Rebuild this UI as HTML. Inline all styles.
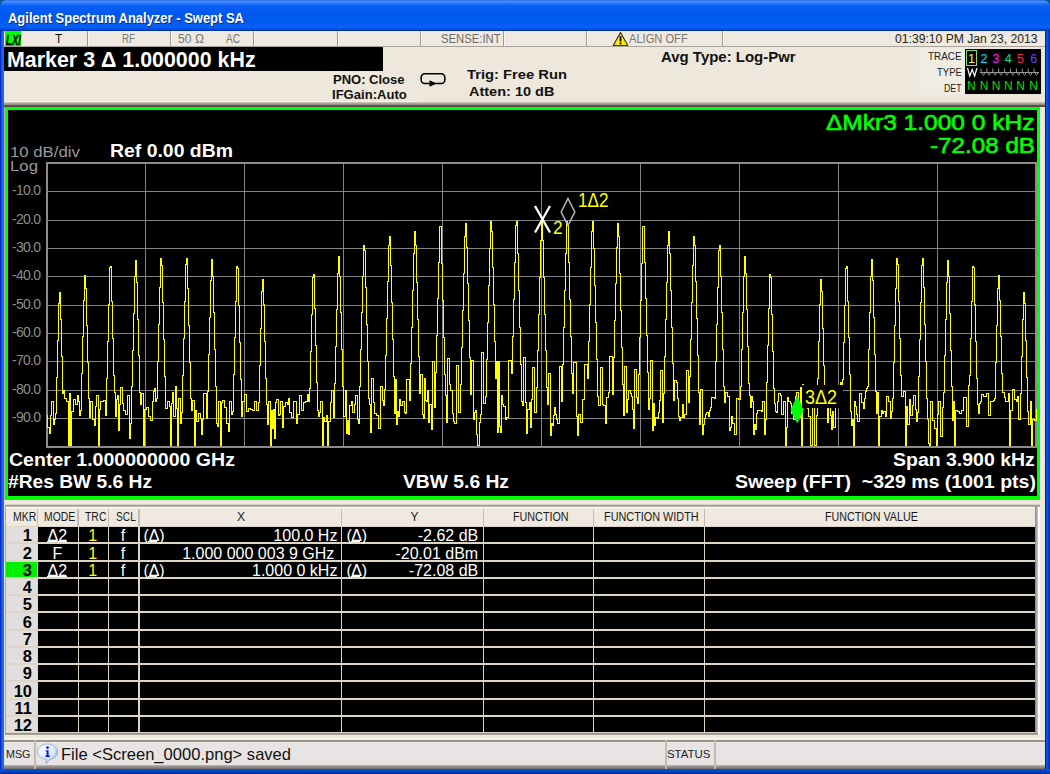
<!DOCTYPE html>
<html><head><meta charset="utf-8">
<style>
*{margin:0;padding:0;box-sizing:border-box}
html,body{width:1050px;height:774px;overflow:hidden;background:#0a4fd8;font-family:"Liberation Sans",sans-serif}
.a{position:absolute;white-space:nowrap}
</style></head><body>

<div class="a" style="left:0px;top:0px;width:1050px;height:774px;background:#0a5a90"></div>
<div class="a" style="left:0px;top:12px;width:1050px;height:762px;background:#0650dc"></div>
<div class="a" style="left:0px;top:0px;width:1050px;height:31px;background:linear-gradient(#2a6ae0 0px,#4a90ff 1.5px,#2a78ff 3px,#0a5ef6 6px,#0058ee 14px,#005af0 22px,#0a62f8 27px,#0050e0 29px,#0030a0 31px);border-radius:7px 7px 0 0"></div>
<div class="a" style="left:0px;top:31px;width:4px;height:743px;background:linear-gradient(90deg,#0024b0 0px,#0a3ad0 1px,#1a64f4 2px,#1a6af8 4px)"></div>
<div class="a" style="left:1045px;top:31px;width:5px;height:743px;background:linear-gradient(90deg,#202020 0px,#202020 1px,#0a5cf6 1px,#0048d8 3px,#002890 5px)"></div>
<div class="a" style="left:0px;top:769px;width:1050px;height:5px;background:linear-gradient(#0a56e0,#0040c0 3px,#002a90 5px)"></div>
<div class="a" style="top:11.00px;font-size:14.5px;line-height:14.5px;font-weight:bold;color:#fff;white-space:pre;left:8.00px;transform:scaleX(0.8948);transform-origin:0 0;text-shadow:1px 1px 0 #0a2a80;">Agilent Spectrum Analyzer - Swept SA</div>
<div class="a" style="left:4px;top:31px;width:1041px;height:738px;background:#ede7dc"></div>
<div class="a" style="left:4px;top:31px;width:1041px;height:16px;background:#efe9df"></div>
<div class="a" style="left:5px;top:31px;width:16px;height:16px;background:#00ff00"></div>
<div class="a" style="top:33.00px;font-size:14px;line-height:14px;font-weight:bold;color:#000;white-space:pre;left:5.50px;transform:scaleX(0.6887);transform-origin:0 0;font-style:italic;-webkit-text-stroke:0.3px #000;">LXI</div>
<div class="a" style="left:4px;top:46px;width:1041px;height:1px;background:#a8a49c"></div>
<div class="a" style="left:87px;top:31px;width:1px;height:15px;background:#9c988c"></div>
<div class="a" style="left:88px;top:31px;width:1px;height:15px;background:#fbf8f0"></div>
<div class="a" style="left:170px;top:31px;width:1px;height:15px;background:#9c988c"></div>
<div class="a" style="left:171px;top:31px;width:1px;height:15px;background:#fbf8f0"></div>
<div class="a" style="left:253px;top:31px;width:1px;height:15px;background:#9c988c"></div>
<div class="a" style="left:254px;top:31px;width:1px;height:15px;background:#fbf8f0"></div>
<div class="a" style="left:337px;top:31px;width:1px;height:15px;background:#9c988c"></div>
<div class="a" style="left:338px;top:31px;width:1px;height:15px;background:#fbf8f0"></div>
<div class="a" style="left:420px;top:31px;width:1px;height:15px;background:#9c988c"></div>
<div class="a" style="left:421px;top:31px;width:1px;height:15px;background:#fbf8f0"></div>
<div class="a" style="left:503px;top:31px;width:1px;height:15px;background:#9c988c"></div>
<div class="a" style="left:504px;top:31px;width:1px;height:15px;background:#fbf8f0"></div>
<div class="a" style="left:586px;top:31px;width:1px;height:15px;background:#9c988c"></div>
<div class="a" style="left:587px;top:31px;width:1px;height:15px;background:#fbf8f0"></div>
<div class="a" style="left:722px;top:31px;width:1px;height:15px;background:#9c988c"></div>
<div class="a" style="left:723px;top:31px;width:1px;height:15px;background:#fbf8f0"></div>
<div class="a" style="top:33.00px;font-size:12px;line-height:12px;font-weight:normal;color:#111;white-space:pre;left:55px;">T</div>
<div class="a" style="top:33.00px;font-size:12.5px;line-height:12.5px;font-weight:normal;color:#777;white-space:pre;left:122.00px;transform:scaleX(0.7798);transform-origin:0 0;">RF</div>
<div class="a" style="top:33.00px;font-size:12.5px;line-height:12.5px;font-weight:normal;color:#777;white-space:pre;left:178.00px;transform:scaleX(0.9731);transform-origin:0 0;">50 Ω</div>
<div class="a" style="top:33.00px;font-size:12.5px;line-height:12.5px;font-weight:normal;color:#777;white-space:pre;left:226.00px;transform:scaleX(0.8058);transform-origin:0 0;">AC</div>
<div class="a" style="top:33.00px;font-size:12.5px;line-height:12.5px;font-weight:normal;color:#6a6a6a;white-space:pre;left:441.00px;transform:scaleX(0.9043);transform-origin:0 0;">SENSE:INT</div>
<div class="a" style="top:33.00px;font-size:12.5px;line-height:12.5px;font-weight:normal;color:#777;white-space:pre;left:629.30px;transform:scaleX(0.8896);transform-origin:0 0;">ALIGN OFF</div>
<svg class="a" style="left:612px;top:31px" width="17" height="16" viewBox="0 0 17 16"><path d="M8.5 1.5 L15.8 14.5 L1.2 14.5 Z" fill="#ffee00" stroke="#333" stroke-width="1.2" stroke-linejoin="round"/><rect x="7.6" y="5" width="1.8" height="5.5" fill="#000"/><rect x="7.6" y="11.5" width="1.8" height="1.8" fill="#000"/></svg>
<div class="a" style="top:33.00px;font-size:12.5px;line-height:12.5px;font-weight:normal;color:#222;white-space:pre;left:894.50px;transform:scaleX(0.9719);transform-origin:0 0;">01:39:10 PM Jan 23, 2013</div>
<div class="a" style="left:4px;top:47px;width:379px;height:24px;background:#000"></div>
<div class="a" style="top:50.00px;font-size:21.5px;line-height:21.5px;font-weight:bold;color:#fff;white-space:pre;left:6.80px;transform:scaleX(0.9954);transform-origin:0 0;">Marker 3 Δ 1.000000 kHz</div>
<div class="a" style="left:4px;top:101px;width:415px;height:1px;background:#f8f4ec"></div>
<div class="a" style="left:4px;top:102px;width:1041px;height:3px;background:linear-gradient(#d0cabe,#8a847a)"></div>
<div class="a" style="left:4px;top:105px;width:1041px;height:1px;background:#5e5850"></div>
<div class="a" style="top:73.00px;font-size:13px;line-height:13px;font-weight:bold;color:#111;white-space:pre;left:333.30px;transform:scaleX(0.9998);transform-origin:0 0;">PNO: Close</div>
<div class="a" style="top:88.00px;font-size:13px;line-height:13px;font-weight:bold;color:#111;white-space:pre;left:332.00px;transform:scaleX(1.0046);transform-origin:0 0;">IFGain:Auto</div>
<svg class="a" style="left:418px;top:70px" width="30" height="20" viewBox="0 0 30 20"><rect x="3.2" y="3.7" width="23.6" height="9.8" rx="3.5" fill="none" stroke="#000" stroke-width="1.6"/><path d="M11.5 10.2 L18.5 13.5 L11.5 16.8 Z" fill="#000"/></svg>
<div class="a" style="top:68.00px;font-size:13.5px;line-height:13.5px;font-weight:bold;color:#111;white-space:pre;left:466.70px;transform:scaleX(1.0925);transform-origin:0 0;">Trig: Free Run</div>
<div class="a" style="top:85.00px;font-size:13.5px;line-height:13.5px;font-weight:bold;color:#111;white-space:pre;left:469.30px;transform:scaleX(1.0736);transform-origin:0 0;">Atten: 10 dB</div>
<div class="a" style="top:50.00px;font-size:14.5px;line-height:14.5px;font-weight:bold;color:#111;white-space:pre;left:661.00px;transform:scaleX(1.0321);transform-origin:0 0;">Avg Type: Log-Pwr</div>
<div class="a" style="left:920px;top:48px;width:45px;height:47px;background:#f1ece2"></div>
<div class="a" style="top:51.00px;font-size:11.5px;line-height:11.5px;font-weight:normal;color:#222;white-space:pre;left:927.50px;transform:scaleX(0.8590);transform-origin:0 0;">TRACE</div>
<div class="a" style="top:67.00px;font-size:11.5px;line-height:11.5px;font-weight:normal;color:#222;white-space:pre;left:936.70px;transform:scaleX(0.8254);transform-origin:0 0;">TYPE</div>
<div class="a" style="top:83.00px;font-size:11.5px;line-height:11.5px;font-weight:normal;color:#222;white-space:pre;left:943.50px;transform:scaleX(0.7604);transform-origin:0 0;">DET</div>
<div class="a" style="left:965px;top:49px;width:76px;height:45px;background:#000"></div>
<div class="a" style="left:966px;top:50px;width:11px;height:16px;border:1px solid #80e080"></div>
<div class="a" style="top:53.00px;font-size:12.5px;line-height:12.5px;font-weight:normal;color:#ffff00;white-space:pre;left:471.4px;width:1000px;text-align:center;">1</div>
<div class="a" style="top:80.00px;font-size:12px;line-height:12px;font-weight:normal;color:#00e000;white-space:pre;left:471.4px;width:1000px;text-align:center;">N</div>
<div class="a" style="top:53.00px;font-size:12.5px;line-height:12.5px;font-weight:normal;color:#00e8ff;white-space:pre;left:484px;width:1000px;text-align:center;">2</div>
<div class="a" style="top:80.00px;font-size:12px;line-height:12px;font-weight:normal;color:#00e000;white-space:pre;left:484px;width:1000px;text-align:center;">N</div>
<div class="a" style="top:53.00px;font-size:12.5px;line-height:12.5px;font-weight:normal;color:#ff20ff;white-space:pre;left:496.1px;width:1000px;text-align:center;">3</div>
<div class="a" style="top:80.00px;font-size:12px;line-height:12px;font-weight:normal;color:#00e000;white-space:pre;left:496.1px;width:1000px;text-align:center;">N</div>
<div class="a" style="top:53.00px;font-size:12.5px;line-height:12.5px;font-weight:normal;color:#00e090;white-space:pre;left:508.29999999999995px;width:1000px;text-align:center;">4</div>
<div class="a" style="top:80.00px;font-size:12px;line-height:12px;font-weight:normal;color:#00e000;white-space:pre;left:508.29999999999995px;width:1000px;text-align:center;">N</div>
<div class="a" style="top:53.00px;font-size:12.5px;line-height:12.5px;font-weight:normal;color:#ff2860;white-space:pre;left:520.5px;width:1000px;text-align:center;">5</div>
<div class="a" style="top:80.00px;font-size:12px;line-height:12px;font-weight:normal;color:#00e000;white-space:pre;left:520.5px;width:1000px;text-align:center;">N</div>
<div class="a" style="top:53.00px;font-size:12.5px;line-height:12.5px;font-weight:normal;color:#6a40ff;white-space:pre;left:533.7px;width:1000px;text-align:center;">6</div>
<div class="a" style="top:80.00px;font-size:12px;line-height:12px;font-weight:normal;color:#00e000;white-space:pre;left:533.7px;width:1000px;text-align:center;">N</div>
<svg class="a" style="left:965px;top:66px" width="76" height="12" viewBox="0 0 76 12"><path d="M2.5 2 L4.8 10 L7.2 3.5 L9.6 10 L12 2" stroke="#fff" stroke-width="1.2" fill="none"/><path d="M15 6.5 L74 6.5 M16.0 6.5 L16.0 2.5 M16.8 6.5 Q18.3 12 19.8 6.5 M21.9 6.5 L21.9 2.5 M22.7 6.5 Q24.2 12 25.7 6.5 M27.8 6.5 L27.8 2.5 M28.6 6.5 Q30.1 12 31.6 6.5 M33.7 6.5 L33.7 2.5 M34.5 6.5 Q36.0 12 37.5 6.5 M39.6 6.5 L39.6 2.5 M40.4 6.5 Q41.9 12 43.4 6.5 M45.5 6.5 L45.5 2.5 M46.3 6.5 Q47.8 12 49.3 6.5 M51.4 6.5 L51.4 2.5 M52.2 6.5 Q53.7 12 55.2 6.5 M57.3 6.5 L57.3 2.5 M58.1 6.5 Q59.6 12 61.1 6.5 M63.2 6.5 L63.2 2.5 M64.0 6.5 Q65.5 12 67.0 6.5 M69.1 6.5 L69.1 2.5 M69.9 6.5 Q71.4 12 72.9 6.5 " stroke="#9a9a9a" stroke-width="1" fill="none"/></svg>
<div class="a" style="left:4px;top:106px;width:1041px;height:395px;background:#ede7dc"></div>
<div class="a" style="left:4px;top:106px;width:1041px;height:1px;background:#4e4842"></div>
<div class="a" style="left:4px;top:107px;width:1px;height:394px;background:#b8b4ac"></div>
<div class="a" style="left:5px;top:107px;width:1035px;height:393px;background:#00ff00"></div>
<div class="a" style="left:8px;top:110px;width:1029px;height:386px;background:#000"></div>
<div class="a" style="top:112.00px;font-size:22.5px;line-height:22.5px;font-weight:normal;color:#00ff00;white-space:pre;left:826.10px;transform:scaleX(1.0890);transform-origin:0 0;-webkit-text-stroke:0.6px #00ff00;">ΔMkr3 1.000 0 kHz</div>
<div class="a" style="top:135.00px;font-size:22.5px;line-height:22.5px;font-weight:normal;color:#00ff00;white-space:pre;left:929.50px;transform:scaleX(1.0761);transform-origin:0 0;-webkit-text-stroke:0.6px #00ff00;">-72.08 dB</div>
<div class="a" style="top:144.00px;font-size:15.5px;line-height:15.5px;font-weight:normal;color:#9a9a9a;white-space:pre;left:10.00px;transform:scaleX(1.0796);transform-origin:0 0;">10 dB/div</div>
<div class="a" style="top:158.00px;font-size:15.5px;line-height:15.5px;font-weight:normal;color:#9a9a9a;white-space:pre;left:10.00px;transform:scaleX(1.0821);transform-origin:0 0;">Log</div>
<div class="a" style="top:142.00px;font-size:18px;line-height:18px;font-weight:bold;color:#fff;white-space:pre;left:110.00px;transform:scaleX(1.0784);transform-origin:0 0;">Ref 0.00 dBm</div>
<div class="a" style="top:183.00px;font-size:14px;line-height:14px;font-weight:normal;color:#8c8c8c;white-space:pre;letter-spacing:-0.723px;right:1009.72px;">-10.0</div>
<div class="a" style="top:212.00px;font-size:14px;line-height:14px;font-weight:normal;color:#8c8c8c;white-space:pre;letter-spacing:-0.723px;right:1009.72px;">-20.0</div>
<div class="a" style="top:240.00px;font-size:14px;line-height:14px;font-weight:normal;color:#8c8c8c;white-space:pre;letter-spacing:-0.723px;right:1009.72px;">-30.0</div>
<div class="a" style="top:268.00px;font-size:14px;line-height:14px;font-weight:normal;color:#8c8c8c;white-space:pre;letter-spacing:-0.723px;right:1009.72px;">-40.0</div>
<div class="a" style="top:297.00px;font-size:14px;line-height:14px;font-weight:normal;color:#8c8c8c;white-space:pre;letter-spacing:-0.723px;right:1009.72px;">-50.0</div>
<div class="a" style="top:325.00px;font-size:14px;line-height:14px;font-weight:normal;color:#8c8c8c;white-space:pre;letter-spacing:-0.723px;right:1009.72px;">-60.0</div>
<div class="a" style="top:353.00px;font-size:14px;line-height:14px;font-weight:normal;color:#8c8c8c;white-space:pre;letter-spacing:-0.723px;right:1009.72px;">-70.0</div>
<div class="a" style="top:382.00px;font-size:14px;line-height:14px;font-weight:normal;color:#8c8c8c;white-space:pre;letter-spacing:-0.723px;right:1009.72px;">-80.0</div>
<div class="a" style="top:410.00px;font-size:14px;line-height:14px;font-weight:normal;color:#8c8c8c;white-space:pre;letter-spacing:-0.723px;right:1009.72px;">-90.0</div>
<svg class="a" style="left:0;top:0" width="1050" height="500" viewBox="0 0 1050 500">
<path d="M46 191.5 L1036 191.5 M46 220.5 L1036 220.5 M46 248.5 L1036 248.5 M46 276.5 L1036 276.5 M46 305.5 L1036 305.5 M46 333.5 L1036 333.5 M46 361.5 L1036 361.5 M46 390.5 L1036 390.5 M46 418.5 L1036 418.5 M145.5 163 L145.5 446.5 M244.5 163 L244.5 446.5 M343.5 163 L343.5 446.5 M442.5 163 L442.5 446.5 M541.5 163 L541.5 446.5 M640.5 163 L640.5 446.5 M739.5 163 L739.5 446.5 M838.5 163 L838.5 446.5 M937.5 163 L937.5 446.5 " stroke="#858585" stroke-width="1" shape-rendering="crispEdges" fill="none"/>
<path d="M46 162 H1036 V164 H48 V446 H1036 V448 H46 Z M1035 162 H1036.5 V448 H1035 Z" fill="#8c8c8c" shape-rendering="crispEdges"/>
<path d="M46 415 H47 V427 H48 V427 H49 V433 H50 V415 H51 V401 H52 V401 H53 V424 H54 V419 H55 V413 H56 V377 H57 V340 H58 V303 H59 V292 H60 V319 H61 V356 H62 V393 H63 V390 H64 V398 H65 V398 H66 V401 H67 V401 H68 V445 H69 V393 H70 V445 H71 V411 H72 V411 H73 V399 H74 V399 H75 V404 H76 V404 H77 V395 H78 V401 H79 V415 H80 V410 H81 V373 H82 V336 H83 V300 H84 V275 H85 V288 H86 V325 H87 V362 H88 V398 H89 V417 H90 V401 H91 V401 H92 V419 H93 V419 H94 V425 H95 V406 H96 V395 H97 V395 H98 V445 H99 V409 H100 V401 H101 V401 H102 V401 H103 V400 H104 V400 H105 V415 H106 V378 H107 V341 H108 V304 H109 V267 H110 V266 H111 V301 H112 V338 H113 V375 H114 V392 H115 V416 H116 V399 H117 V395 H118 V430 H119 V404 H120 V387 H121 V387 H122 V403 H123 V410 H124 V410 H125 V414 H126 V414 H127 V395 H128 V395 H129 V438 H130 V423 H131 V386 H132 V350 H133 V313 H134 V276 H135 V260 H136 V282 H137 V319 H138 V355 H139 V392 H140 V404 H141 V393 H142 V393 H143 V445 H144 V409 H145 V409 H146 V407 H147 V407 H148 V416 H149 V416 H150 V420 H151 V420 H152 V401 H153 V391 H154 V388 H155 V401 H156 V398 H157 V361 H158 V324 H159 V287 H160 V258 H161 V265 H162 V302 H163 V339 H164 V376 H165 V408 H166 V408 H167 V401 H168 V401 H169 V406 H170 V445 H171 V403 H172 V392 H173 V416 H174 V416 H175 V386 H176 V408 H177 V445 H178 V398 H179 V398 H180 V423 H181 V412 H182 V375 H183 V338 H184 V301 H185 V264 H186 V258 H187 V288 H188 V325 H189 V362 H190 V398 H191 V410 H192 V400 H193 V400 H194 V445 H195 V410 H196 V421 H197 V421 H198 V413 H199 V413 H200 V418 H201 V434 H202 V419 H203 V393 H204 V393 H205 V393 H206 V418 H207 V391 H208 V354 H209 V317 H210 V280 H211 V259 H212 V276 H213 V312 H214 V349 H215 V386 H216 V423 H217 V426 H218 V401 H219 V401 H220 V445 H221 V402 H222 V400 H223 V400 H224 V407 H225 V407 H226 V423 H227 V423 H228 V431 H229 V401 H230 V401 H231 V414 H232 V411 H233 V374 H234 V337 H235 V301 H236 V266 H237 V268 H238 V305 H239 V342 H240 V379 H241 V416 H242 V401 H243 V401 H244 V394 H245 V394 H246 V411 H247 V411 H248 V408 H249 V408 H250 V409 H251 V409 H252 V410 H253 V410 H254 V401 H255 V401 H256 V410 H257 V410 H258 V402 H259 V365 H260 V328 H261 V291 H262 V279 H263 V304 H264 V341 H265 V378 H266 V404 H267 V424 H268 V401 H269 V401 H270 V445 H271 V410 H272 V428 H273 V409 H274 V438 H275 V402 H276 V399 H277 V399 H278 V415 H279 V414 H280 V401 H281 V401 H282 V427 H283 V406 H284 V406 H285 V402 H286 V402 H287 V404 H288 V398 H289 V412 H290 V412 H291 V417 H292 V417 H293 V401 H294 V401 H295 V401 H296 V423 H297 V414 H298 V414 H299 V395 H300 V395 H301 V410 H302 V410 H303 V402 H304 V402 H305 V401 H306 V401 H307 V394 H308 V401 H309 V388 H310 V351 H311 V314 H312 V277 H313 V274 H314 V308 H315 V345 H316 V382 H317 V410 H318 V416 H319 V412 H320 V401 H321 V401 H322 V445 H323 V417 H324 V421 H325 V421 H326 V415 H327 V445 H328 V421 H329 V421 H330 V402 H331 V390 H332 V390 H333 V417 H334 V383 H335 V346 H336 V309 H337 V273 H338 V256 H339 V276 H340 V312 H341 V349 H342 V386 H343 V416 H344 V416 H345 V390 H346 V433 H347 V420 H348 V434 H349 V405 H350 V405 H351 V401 H352 V412 H353 V412 H354 V404 H355 V395 H356 V395 H357 V419 H358 V423 H359 V386 H360 V349 H361 V312 H362 V276 H363 V245 H364 V250 H365 V287 H366 V324 H367 V361 H368 V398 H369 V404 H370 V432 H371 V378 H372 V378 H373 V402 H374 V413 H375 V413 H376 V415 H377 V415 H378 V428 H379 V428 H380 V386 H381 V386 H382 V400 H383 V405 H384 V389 H385 V355 H386 V318 H387 V281 H388 V245 H389 V236 H390 V265 H391 V302 H392 V339 H393 V376 H394 V413 H395 V379 H396 V424 H397 V411 H398 V416 H399 V399 H400 V405 H401 V405 H402 V401 H403 V401 H404 V412 H405 V413 H406 V379 H407 V379 H408 V379 H409 V400 H410 V363 H411 V327 H412 V290 H413 V253 H414 V231 H415 V245 H416 V282 H417 V319 H418 V356 H419 V393 H420 V374 H421 V374 H422 V414 H423 V418 H424 V378 H425 V400 H426 V401 H427 V390 H428 V422 H429 V404 H430 V404 H431 V429 H432 V361 H433 V361 H434 V407 H435 V372 H436 V335 H437 V298 H438 V262 H439 V226 H440 V226 H441 V263 H442 V300 H443 V337 H444 V374 H445 V395 H446 V422 H447 V358 H448 V358 H449 V384 H450 V390 H451 V390 H452 V413 H453 V421 H454 V423 H455 V423 H456 V365 H457 V365 H458 V412 H459 V412 H460 V384 H461 V347 H462 V310 H463 V273 H464 V236 H465 V223 H466 V247 H467 V283 H468 V320 H469 V357 H470 V394 H471 V360 H472 V360 H473 V419 H474 V412 H475 V410 H476 V434 H477 V445 H478 V445 H479 V422 H480 V414 H481 V352 H482 V352 H483 V403 H484 V403 H485 V396 H486 V359 H487 V322 H488 V285 H489 V248 H490 V221 H491 V231 H492 V267 H493 V304 H494 V341 H495 V378 H496 V361 H497 V432 H498 V361 H499 V426 H500 V432 H501 V395 H502 V404 H503 V406 H504 V406 H505 V419 H506 V417 H507 V417 H508 V360 H509 V360 H510 V360 H511 V373 H512 V336 H513 V299 H514 V262 H515 V225 H516 V221 H517 V253 H518 V290 H519 V327 H520 V364 H521 V401 H522 V405 H523 V357 H524 V357 H525 V402 H526 V433 H527 V409 H528 V409 H529 V402 H530 V427 H531 V399 H532 V367 H533 V367 H534 V412 H535 V412 H536 V387 H537 V350 H538 V314 H539 V277 H540 V240 H541 V222 H542 V240 H543 V277 H544 V314 H545 V350 H546 V387 H547 V404 H548 V373 H549 V373 H550 V435 H551 V423 H552 V425 H553 V415 H554 V407 H555 V414 H556 V419 H557 V423 H558 V423 H559 V366 H560 V366 H561 V401 H562 V364 H563 V327 H564 V290 H565 V253 H566 V221 H567 V225 H568 V262 H569 V299 H570 V336 H571 V373 H572 V393 H573 V362 H574 V362 H575 V362 H576 V416 H577 V435 H578 V414 H579 V414 H580 V422 H581 V422 H582 V399 H583 V399 H584 V364 H585 V364 H586 V364 H587 V378 H588 V341 H589 V304 H590 V267 H591 V231 H592 V221 H593 V248 H594 V285 H595 V322 H596 V359 H597 V396 H598 V405 H599 V405 H600 V367 H601 V367 H602 V404 H603 V405 H604 V405 H605 V423 H606 V397 H607 V397 H608 V392 H609 V356 H610 V356 H611 V356 H612 V394 H613 V357 H614 V320 H615 V283 H616 V247 H617 V223 H618 V236 H619 V273 H620 V310 H621 V347 H622 V384 H623 V415 H624 V366 H625 V366 H626 V412 H627 V399 H628 V390 H629 V390 H630 V393 H631 V396 H632 V409 H633 V428 H634 V369 H635 V369 H636 V397 H637 V403 H638 V374 H639 V337 H640 V300 H641 V263 H642 V226 H643 V226 H644 V262 H645 V298 H646 V335 H647 V372 H648 V409 H649 V398 H650 V360 H651 V360 H652 V430 H653 V403 H654 V425 H655 V417 H656 V417 H657 V418 H658 V412 H659 V400 H660 V370 H661 V370 H662 V422 H663 V393 H664 V356 H665 V319 H666 V282 H667 V245 H668 V231 H669 V253 H670 V290 H671 V327 H672 V363 H673 V400 H674 V380 H675 V380 H676 V382 H677 V398 H678 V416 H679 V420 H680 V417 H681 V417 H682 V404 H683 V417 H684 V414 H685 V414 H686 V370 H687 V370 H688 V402 H689 V376 H690 V339 H691 V302 H692 V265 H693 V236 H694 V245 H695 V281 H696 V318 H697 V355 H698 V392 H699 V424 H700 V389 H701 V389 H702 V434 H703 V424 H704 V418 H705 V414 H706 V412 H707 V412 H708 V416 H709 V410 H710 V407 H711 V397 H712 V397 H713 V397 H714 V398 H715 V361 H716 V324 H717 V287 H718 V250 H719 V245 H720 V276 H721 V312 H722 V349 H723 V386 H724 V402 H725 V392 H726 V392 H727 V396 H728 V396 H729 V430 H730 V427 H731 V416 H732 V423 H733 V423 H734 V434 H735 V434 H736 V398 H737 V398 H738 V399 H739 V399 H740 V386 H741 V349 H742 V312 H743 V276 H744 V256 H745 V273 H746 V309 H747 V346 H748 V383 H749 V395 H750 V407 H751 V396 H752 V401 H753 V434 H754 V424 H755 V429 H756 V413 H757 V410 H758 V410 H759 V410 H760 V410 H761 V411 H762 V401 H763 V401 H764 V434 H765 V419 H766 V382 H767 V345 H768 V308 H769 V274 H770 V277 H771 V314 H772 V351 H773 V388 H774 V403 H775 V411 H776 V412 H777 V401 H778 V393 H779 V393 H780 V395 H781 V414 H782 V414 H783 V401 H784 V401 H785 V445 H786 V427 H787 V397 H788 V401 H789 V401 H790 V403 H791 V413 H792 V413 H793 V419 H794 V419 H795 V396 H796 V392 H797 V392 H798 V417 H799 V417 H800 V387 H801 V445 H802 V384 H803 V401 H804 V389 H805 V392 H806 V397 H807 V408 H808 V416 H809 V416 H810 V445 H811 V445 H812 V401 H813 V401 H814 V445 H815 V445 H816 V415 H817 V378 H818 V341 H819 V304 H820 V279 H821 V291 H822 V328 H823 V365 H824 V401 H825 V396 H826 V396 H827 V422 H828 V401 H829 V401 H830 V415 H831 V429 H832 V411 H833 V427 H834 V427 H835 V401 H836 V401 H837 V389 H838 V389 H839 V401 H840 V382 H841 V393 H842 V379 H843 V342 H844 V305 H845 V268 H846 V266 H847 V301 H848 V337 H849 V374 H850 V411 H851 V425 H852 V419 H853 V445 H854 V401 H855 V406 H856 V414 H857 V421 H858 V421 H859 V393 H860 V393 H861 V402 H862 V402 H863 V408 H864 V398 H865 V391 H866 V388 H867 V386 H868 V349 H869 V312 H870 V276 H871 V259 H872 V280 H873 V317 H874 V354 H875 V391 H876 V413 H877 V392 H878 V445 H879 V416 H880 V416 H881 V410 H882 V413 H883 V411 H884 V411 H885 V416 H886 V396 H887 V396 H888 V401 H889 V401 H890 V418 H891 V411 H892 V398 H893 V362 H894 V325 H895 V288 H896 V258 H897 V264 H898 V301 H899 V338 H900 V375 H901 V396 H902 V396 H903 V391 H904 V391 H905 V445 H906 V406 H907 V424 H908 V424 H909 V399 H910 V415 H911 V415 H912 V405 H913 V395 H914 V395 H915 V409 H916 V421 H917 V412 H918 V376 H919 V339 H920 V302 H921 V265 H922 V258 H923 V287 H924 V324 H925 V361 H926 V398 H927 V419 H928 V443 H929 V445 H930 V401 H931 V401 H932 V420 H933 V420 H934 V428 H935 V428 H936 V445 H937 V414 H938 V401 H939 V401 H940 V436 H941 V436 H942 V407 H943 V392 H944 V355 H945 V319 H946 V282 H947 V260 H948 V276 H949 V313 H950 V350 H951 V386 H952 V420 H953 V401 H954 V445 H955 V410 H956 V410 H957 V411 H958 V411 H959 V413 H960 V413 H961 V410 H962 V410 H963 V397 H964 V397 H965 V397 H966 V426 H967 V426 H968 V385 H969 V375 H970 V338 H971 V301 H972 V266 H973 V267 H974 V304 H975 V341 H976 V378 H977 V404 H978 V413 H979 V403 H980 V401 H981 V394 H982 V394 H983 V396 H984 V396 H985 V396 H986 V393 H987 V393 H988 V415 H989 V415 H990 V401 H991 V401 H992 V401 H993 V400 H994 V398 H995 V362 H996 V325 H997 V288 H998 V275 H999 V300 H1000 V336 H1001 V373 H1002 V392 H1003 V392 H1004 V397 H1005 V401 H1006 V401 H1007 V401 H1008 V393 H1009 V445 H1010 V410 H1011 V410 H1012 V389 H1013 V389 H1014 V399 H1015 V399 H1016 V401 H1017 V396 H1018 V419 H1019 V419 H1020 V393 H1021 V356 H1022 V319 H1023 V292 H1024 V303 H1025 V340 H1026 V377 H1027 V411 H1028 V424 H1029 V424 H1030 V401 H1031 V445 H1032 V419 H1033 V419 H1034 V420 H1035 V420 H1036 V408" stroke="#ffff00" stroke-width="1" fill="none" shape-rendering="crispEdges" transform="translate(0.5 0.5)"/>
</svg>
<svg class="a" style="left:530px;top:200px" width="40" height="40"><path d="M5 6 L20 32.5 M20 6 L5 32.5" stroke="#fff" stroke-width="2.3"/></svg>
<div class="a" style="top:218.00px;font-size:19px;line-height:19px;font-weight:normal;color:#ffff00;white-space:pre;left:552.80px;transform:scaleX(0.9089);transform-origin:0 0;">2</div>
<svg class="a" style="left:555px;top:193px" width="26" height="36"><path d="M13 5.5 L19.8 19 L13 32.5 L6.2 19 Z" fill="none" stroke="#b8b8b8" stroke-width="1.5"/></svg>
<div class="a" style="top:190.00px;font-size:20px;line-height:20px;font-weight:normal;color:#ffff00;white-space:pre;left:577.70px;transform:scaleX(0.8537);transform-origin:0 0;">1Δ2</div>
<svg class="a" style="left:785px;top:390px" width="26" height="40"><path d="M12.2 6 L18.9 19.7 L12.2 33.4 L5.5 19.7 Z" fill="#00ff00"/></svg>
<div class="a" style="left:802px;top:385px;width:41px;height:23px;background:#000"></div>
<div class="a" style="top:387.00px;font-size:20px;line-height:20px;font-weight:normal;color:#ffff00;white-space:pre;left:805.40px;transform:scaleX(0.8986);transform-origin:0 0;">3Δ2</div>
<div class="a" style="top:451.00px;font-size:18px;line-height:18px;font-weight:bold;color:#fff;white-space:pre;left:9.00px;transform:scaleX(1.0856);transform-origin:0 0;">Center 1.000000000 GHz</div>
<div class="a" style="top:473.00px;font-size:18px;line-height:18px;font-weight:bold;color:#fff;white-space:pre;left:8.30px;transform:scaleX(1.0662);transform-origin:0 0;">#Res BW 5.6 Hz</div>
<div class="a" style="top:473.00px;font-size:18px;line-height:18px;font-weight:bold;color:#fff;white-space:pre;left:403.30px;transform:scaleX(1.0705);transform-origin:0 0;">VBW 5.6 Hz</div>
<div class="a" style="top:451.00px;font-size:18px;line-height:18px;font-weight:bold;color:#fff;white-space:pre;left:893.40px;transform:scaleX(1.0817);transform-origin:0 0;">Span 3.900 kHz</div>
<div class="a" style="top:473.00px;font-size:18px;line-height:18px;font-weight:bold;color:#fff;white-space:pre;left:734.80px;transform:scaleX(1.0840);transform-origin:0 0;">Sweep (FFT)  ~329 ms (1001 pts)</div>
<div class="a" style="left:4px;top:500px;width:1041px;height:269px;background:#ede7dc"></div>
<div class="a" style="left:5px;top:504px;width:1035px;height:1px;background:#d8d2c8"></div>
<div class="a" style="left:5px;top:505px;width:1035px;height:2px;background:linear-gradient(#9a968e,#bcb8b0)"></div>
<div class="a" style="left:5px;top:507px;width:1035px;height:228px;background:#fff;"></div>
<div class="a" style="left:5px;top:506px;width:1px;height:229px;background:#a8a498"></div>
<div class="a" style="left:1035px;top:506px;width:3px;height:229px;background:linear-gradient(90deg,#888,#c8c8c8)"></div>
<div class="a" style="left:6px;top:508px;width:1029px;height:18px;background:#efe9df"></div>
<div class="a" style="left:6px;top:526px;width:1029px;height:208px;background:#ddd5c6"></div>
<div class="a" style="left:6px;top:527px;width:31px;height:15px;background:#e2dede"></div>
<div class="a" style="left:38px;top:527px;width:40px;height:15px;background:#000"></div>
<div class="a" style="left:79px;top:527px;width:29px;height:15px;background:#000"></div>
<div class="a" style="left:109px;top:527px;width:29px;height:15px;background:#000"></div>
<div class="a" style="left:140px;top:527px;width:201px;height:15px;background:#000"></div>
<div class="a" style="left:342px;top:527px;width:141px;height:15px;background:#000"></div>
<div class="a" style="left:484px;top:527px;width:109px;height:15px;background:#000"></div>
<div class="a" style="left:594px;top:527px;width:110px;height:15px;background:#000"></div>
<div class="a" style="left:705px;top:527px;width:330px;height:15px;background:#000"></div>
<div class="a" style="top:527.00px;font-size:16.5px;line-height:16.5px;font-weight:bold;color:#000;white-space:pre;right:1018.00px;">1</div>
<div class="a" style="left:6px;top:544px;width:31px;height:16px;background:#e2dede"></div>
<div class="a" style="left:38px;top:544px;width:40px;height:16px;background:#000"></div>
<div class="a" style="left:79px;top:544px;width:29px;height:16px;background:#000"></div>
<div class="a" style="left:109px;top:544px;width:29px;height:16px;background:#000"></div>
<div class="a" style="left:140px;top:544px;width:201px;height:16px;background:#000"></div>
<div class="a" style="left:342px;top:544px;width:141px;height:16px;background:#000"></div>
<div class="a" style="left:484px;top:544px;width:109px;height:16px;background:#000"></div>
<div class="a" style="left:594px;top:544px;width:110px;height:16px;background:#000"></div>
<div class="a" style="left:705px;top:544px;width:330px;height:16px;background:#000"></div>
<div class="a" style="top:545.00px;font-size:16.5px;line-height:16.5px;font-weight:bold;color:#000;white-space:pre;right:1018.00px;">2</div>
<div class="a" style="left:6px;top:562px;width:31px;height:15px;background:#00f000"></div>
<div class="a" style="left:38px;top:562px;width:40px;height:15px;background:#000"></div>
<div class="a" style="left:79px;top:562px;width:29px;height:15px;background:#000"></div>
<div class="a" style="left:109px;top:562px;width:29px;height:15px;background:#000"></div>
<div class="a" style="left:140px;top:562px;width:201px;height:15px;background:#000"></div>
<div class="a" style="left:342px;top:562px;width:141px;height:15px;background:#000"></div>
<div class="a" style="left:484px;top:562px;width:109px;height:15px;background:#000"></div>
<div class="a" style="left:594px;top:562px;width:110px;height:15px;background:#000"></div>
<div class="a" style="left:705px;top:562px;width:330px;height:15px;background:#000"></div>
<div class="a" style="top:562.00px;font-size:16.5px;line-height:16.5px;font-weight:bold;color:#000;white-space:pre;right:1018.00px;">3</div>
<div class="a" style="left:6px;top:579px;width:31px;height:15px;background:#e2dede"></div>
<div class="a" style="left:38px;top:579px;width:40px;height:15px;background:#000"></div>
<div class="a" style="left:79px;top:579px;width:29px;height:15px;background:#000"></div>
<div class="a" style="left:109px;top:579px;width:29px;height:15px;background:#000"></div>
<div class="a" style="left:140px;top:579px;width:201px;height:15px;background:#000"></div>
<div class="a" style="left:342px;top:579px;width:141px;height:15px;background:#000"></div>
<div class="a" style="left:484px;top:579px;width:109px;height:15px;background:#000"></div>
<div class="a" style="left:594px;top:579px;width:110px;height:15px;background:#000"></div>
<div class="a" style="left:705px;top:579px;width:330px;height:15px;background:#000"></div>
<div class="a" style="top:579.00px;font-size:16.5px;line-height:16.5px;font-weight:bold;color:#000;white-space:pre;right:1018.00px;">4</div>
<div class="a" style="left:6px;top:596px;width:31px;height:15px;background:#e2dede"></div>
<div class="a" style="left:38px;top:596px;width:40px;height:15px;background:#000"></div>
<div class="a" style="left:79px;top:596px;width:29px;height:15px;background:#000"></div>
<div class="a" style="left:109px;top:596px;width:29px;height:15px;background:#000"></div>
<div class="a" style="left:140px;top:596px;width:201px;height:15px;background:#000"></div>
<div class="a" style="left:342px;top:596px;width:141px;height:15px;background:#000"></div>
<div class="a" style="left:484px;top:596px;width:109px;height:15px;background:#000"></div>
<div class="a" style="left:594px;top:596px;width:110px;height:15px;background:#000"></div>
<div class="a" style="left:705px;top:596px;width:330px;height:15px;background:#000"></div>
<div class="a" style="top:596.00px;font-size:16.5px;line-height:16.5px;font-weight:bold;color:#000;white-space:pre;right:1018.00px;">5</div>
<div class="a" style="left:6px;top:613px;width:31px;height:16px;background:#e2dede"></div>
<div class="a" style="left:38px;top:613px;width:40px;height:16px;background:#000"></div>
<div class="a" style="left:79px;top:613px;width:29px;height:16px;background:#000"></div>
<div class="a" style="left:109px;top:613px;width:29px;height:16px;background:#000"></div>
<div class="a" style="left:140px;top:613px;width:201px;height:16px;background:#000"></div>
<div class="a" style="left:342px;top:613px;width:141px;height:16px;background:#000"></div>
<div class="a" style="left:484px;top:613px;width:109px;height:16px;background:#000"></div>
<div class="a" style="left:594px;top:613px;width:110px;height:16px;background:#000"></div>
<div class="a" style="left:705px;top:613px;width:330px;height:16px;background:#000"></div>
<div class="a" style="top:614.00px;font-size:16.5px;line-height:16.5px;font-weight:bold;color:#000;white-space:pre;right:1018.00px;">6</div>
<div class="a" style="left:6px;top:631px;width:31px;height:15px;background:#e2dede"></div>
<div class="a" style="left:38px;top:631px;width:40px;height:15px;background:#000"></div>
<div class="a" style="left:79px;top:631px;width:29px;height:15px;background:#000"></div>
<div class="a" style="left:109px;top:631px;width:29px;height:15px;background:#000"></div>
<div class="a" style="left:140px;top:631px;width:201px;height:15px;background:#000"></div>
<div class="a" style="left:342px;top:631px;width:141px;height:15px;background:#000"></div>
<div class="a" style="left:484px;top:631px;width:109px;height:15px;background:#000"></div>
<div class="a" style="left:594px;top:631px;width:110px;height:15px;background:#000"></div>
<div class="a" style="left:705px;top:631px;width:330px;height:15px;background:#000"></div>
<div class="a" style="top:631.00px;font-size:16.5px;line-height:16.5px;font-weight:bold;color:#000;white-space:pre;right:1018.00px;">7</div>
<div class="a" style="left:6px;top:648px;width:31px;height:15px;background:#e2dede"></div>
<div class="a" style="left:38px;top:648px;width:40px;height:15px;background:#000"></div>
<div class="a" style="left:79px;top:648px;width:29px;height:15px;background:#000"></div>
<div class="a" style="left:109px;top:648px;width:29px;height:15px;background:#000"></div>
<div class="a" style="left:140px;top:648px;width:201px;height:15px;background:#000"></div>
<div class="a" style="left:342px;top:648px;width:141px;height:15px;background:#000"></div>
<div class="a" style="left:484px;top:648px;width:109px;height:15px;background:#000"></div>
<div class="a" style="left:594px;top:648px;width:110px;height:15px;background:#000"></div>
<div class="a" style="left:705px;top:648px;width:330px;height:15px;background:#000"></div>
<div class="a" style="top:648.00px;font-size:16.5px;line-height:16.5px;font-weight:bold;color:#000;white-space:pre;right:1018.00px;">8</div>
<div class="a" style="left:6px;top:665px;width:31px;height:15px;background:#e2dede"></div>
<div class="a" style="left:38px;top:665px;width:40px;height:15px;background:#000"></div>
<div class="a" style="left:79px;top:665px;width:29px;height:15px;background:#000"></div>
<div class="a" style="left:109px;top:665px;width:29px;height:15px;background:#000"></div>
<div class="a" style="left:140px;top:665px;width:201px;height:15px;background:#000"></div>
<div class="a" style="left:342px;top:665px;width:141px;height:15px;background:#000"></div>
<div class="a" style="left:484px;top:665px;width:109px;height:15px;background:#000"></div>
<div class="a" style="left:594px;top:665px;width:110px;height:15px;background:#000"></div>
<div class="a" style="left:705px;top:665px;width:330px;height:15px;background:#000"></div>
<div class="a" style="top:665.00px;font-size:16.5px;line-height:16.5px;font-weight:bold;color:#000;white-space:pre;right:1018.00px;">9</div>
<div class="a" style="left:6px;top:682px;width:31px;height:16px;background:#e2dede"></div>
<div class="a" style="left:38px;top:682px;width:40px;height:16px;background:#000"></div>
<div class="a" style="left:79px;top:682px;width:29px;height:16px;background:#000"></div>
<div class="a" style="left:109px;top:682px;width:29px;height:16px;background:#000"></div>
<div class="a" style="left:140px;top:682px;width:201px;height:16px;background:#000"></div>
<div class="a" style="left:342px;top:682px;width:141px;height:16px;background:#000"></div>
<div class="a" style="left:484px;top:682px;width:109px;height:16px;background:#000"></div>
<div class="a" style="left:594px;top:682px;width:110px;height:16px;background:#000"></div>
<div class="a" style="left:705px;top:682px;width:330px;height:16px;background:#000"></div>
<div class="a" style="top:683.00px;font-size:16.5px;line-height:16.5px;font-weight:bold;color:#000;white-space:pre;right:1018.00px;">10</div>
<div class="a" style="left:6px;top:700px;width:31px;height:15px;background:#e2dede"></div>
<div class="a" style="left:38px;top:700px;width:40px;height:15px;background:#000"></div>
<div class="a" style="left:79px;top:700px;width:29px;height:15px;background:#000"></div>
<div class="a" style="left:109px;top:700px;width:29px;height:15px;background:#000"></div>
<div class="a" style="left:140px;top:700px;width:201px;height:15px;background:#000"></div>
<div class="a" style="left:342px;top:700px;width:141px;height:15px;background:#000"></div>
<div class="a" style="left:484px;top:700px;width:109px;height:15px;background:#000"></div>
<div class="a" style="left:594px;top:700px;width:110px;height:15px;background:#000"></div>
<div class="a" style="left:705px;top:700px;width:330px;height:15px;background:#000"></div>
<div class="a" style="top:700.00px;font-size:16.5px;line-height:16.5px;font-weight:bold;color:#000;white-space:pre;right:1018.00px;">11</div>
<div class="a" style="left:6px;top:717px;width:31px;height:15px;background:#e2dede"></div>
<div class="a" style="left:38px;top:717px;width:40px;height:15px;background:#000"></div>
<div class="a" style="left:79px;top:717px;width:29px;height:15px;background:#000"></div>
<div class="a" style="left:109px;top:717px;width:29px;height:15px;background:#000"></div>
<div class="a" style="left:140px;top:717px;width:201px;height:15px;background:#000"></div>
<div class="a" style="left:342px;top:717px;width:141px;height:15px;background:#000"></div>
<div class="a" style="left:484px;top:717px;width:109px;height:15px;background:#000"></div>
<div class="a" style="left:594px;top:717px;width:110px;height:15px;background:#000"></div>
<div class="a" style="left:705px;top:717px;width:330px;height:15px;background:#000"></div>
<div class="a" style="top:717.00px;font-size:16.5px;line-height:16.5px;font-weight:bold;color:#000;white-space:pre;right:1018.00px;">12</div>
<div class="a" style="left:36.5px;top:509px;width:1.5px;height:17px;background:#c4bcb0"></div>
<div class="a" style="left:77.0px;top:509px;width:1.5px;height:17px;background:#c4bcb0"></div>
<div class="a" style="left:107.5px;top:509px;width:1.5px;height:17px;background:#c4bcb0"></div>
<div class="a" style="left:138.0px;top:509px;width:1.5px;height:17px;background:#c4bcb0"></div>
<div class="a" style="left:340.5px;top:509px;width:1.5px;height:17px;background:#c4bcb0"></div>
<div class="a" style="left:482.5px;top:509px;width:1.5px;height:17px;background:#c4bcb0"></div>
<div class="a" style="left:592.5px;top:509px;width:1.5px;height:17px;background:#c4bcb0"></div>
<div class="a" style="left:703.5px;top:509px;width:1.5px;height:17px;background:#c4bcb0"></div>
<div class="a" style="top:511.00px;font-size:12px;line-height:12px;font-weight:normal;color:#1a1a1a;white-space:pre;left:12.50px;transform:scaleX(0.8736);transform-origin:0 0;">MKR</div>
<div class="a" style="top:511.00px;font-size:12px;line-height:12px;font-weight:normal;color:#1a1a1a;white-space:pre;left:44.20px;transform:scaleX(0.8667);transform-origin:0 0;">MODE</div>
<div class="a" style="top:511.00px;font-size:12px;line-height:12px;font-weight:normal;color:#1a1a1a;white-space:pre;left:85.30px;transform:scaleX(0.8674);transform-origin:0 0;">TRC</div>
<div class="a" style="top:511.00px;font-size:12px;line-height:12px;font-weight:normal;color:#1a1a1a;white-space:pre;left:115.80px;transform:scaleX(0.8482);transform-origin:0 0;">SCL</div>
<div class="a" style="top:511.00px;font-size:12px;line-height:12px;font-weight:normal;color:#1a1a1a;white-space:pre;left:-259px;width:1000px;text-align:center;">X</div>
<div class="a" style="top:511.00px;font-size:12px;line-height:12px;font-weight:normal;color:#1a1a1a;white-space:pre;left:-85.5px;width:1000px;text-align:center;">Y</div>
<div class="a" style="top:511.00px;font-size:12px;line-height:12px;font-weight:normal;color:#1a1a1a;white-space:pre;left:512.90px;transform:scaleX(0.8968);transform-origin:0 0;">FUNCTION</div>
<div class="a" style="top:511.00px;font-size:12px;line-height:12px;font-weight:normal;color:#1a1a1a;white-space:pre;left:603.50px;transform:scaleX(0.9039);transform-origin:0 0;">FUNCTION WIDTH</div>
<div class="a" style="top:511.00px;font-size:12px;line-height:12px;font-weight:normal;color:#1a1a1a;white-space:pre;left:825.20px;transform:scaleX(0.8942);transform-origin:0 0;">FUNCTION VALUE</div>
<div class="a" style="top:528.00px;font-size:16px;line-height:16px;font-weight:normal;color:#fff;white-space:pre;left:-442.7px;width:1000px;text-align:center;">Δ2</div>
<div class="a" style="top:528.00px;font-size:16px;line-height:16px;font-weight:normal;color:#ffff00;white-space:pre;left:-407.2px;width:1000px;text-align:center;">1</div>
<div class="a" style="top:528.00px;font-size:16px;line-height:16px;font-weight:normal;color:#fff;white-space:pre;left:-377px;width:1000px;text-align:center;">f</div>
<div class="a" style="top:528.00px;font-size:16px;line-height:16px;font-weight:normal;color:#fff;white-space:pre;letter-spacing:-0.172px;left:143.6px;">(Δ)</div>
<div class="a" style="top:528.00px;font-size:16px;line-height:16px;font-weight:normal;color:#fff;white-space:pre;letter-spacing:-0.372px;left:346.4px;">(Δ)</div>
<div class="a" style="left:47px;top:540.5px;width:20px;height:1.2px;background:#fff"></div>
<div class="a" style="left:148px;top:540.5px;width:9px;height:1.2px;background:#fff"></div>
<div class="a" style="left:351px;top:540.5px;width:9px;height:1.2px;background:#fff"></div>
<div class="a" style="top:528.00px;font-size:16px;line-height:16px;font-weight:normal;color:#fff;white-space:pre;right:712.60px;">100.0 Hz</div>
<div class="a" style="top:528.00px;font-size:16px;line-height:16px;font-weight:normal;color:#fff;white-space:pre;right:571.80px;">-2.62 dB</div>
<div class="a" style="top:546.00px;font-size:16px;line-height:16px;font-weight:normal;color:#fff;white-space:pre;left:-442.7px;width:1000px;text-align:center;">F</div>
<div class="a" style="top:546.00px;font-size:16px;line-height:16px;font-weight:normal;color:#ffff00;white-space:pre;left:-407.2px;width:1000px;text-align:center;">1</div>
<div class="a" style="top:546.00px;font-size:16px;line-height:16px;font-weight:normal;color:#fff;white-space:pre;left:-377px;width:1000px;text-align:center;">f</div>
<div class="a" style="top:546.00px;font-size:16px;line-height:16px;font-weight:normal;color:#fff;white-space:pre;right:715.70px;">1.000 000 003 9 GHz</div>
<div class="a" style="top:546.00px;font-size:16px;line-height:16px;font-weight:normal;color:#fff;white-space:pre;right:571.80px;">-20.01 dBm</div>
<div class="a" style="top:563.00px;font-size:16px;line-height:16px;font-weight:normal;color:#fff;white-space:pre;left:-442.7px;width:1000px;text-align:center;">Δ2</div>
<div class="a" style="top:563.00px;font-size:16px;line-height:16px;font-weight:normal;color:#ffff00;white-space:pre;left:-407.2px;width:1000px;text-align:center;">1</div>
<div class="a" style="top:563.00px;font-size:16px;line-height:16px;font-weight:normal;color:#fff;white-space:pre;left:-377px;width:1000px;text-align:center;">f</div>
<div class="a" style="top:563.00px;font-size:16px;line-height:16px;font-weight:normal;color:#fff;white-space:pre;letter-spacing:-0.172px;left:143.6px;">(Δ)</div>
<div class="a" style="top:563.00px;font-size:16px;line-height:16px;font-weight:normal;color:#fff;white-space:pre;letter-spacing:-0.372px;left:346.4px;">(Δ)</div>
<div class="a" style="left:47px;top:575.5px;width:20px;height:1.2px;background:#fff"></div>
<div class="a" style="left:148px;top:575.5px;width:9px;height:1.2px;background:#fff"></div>
<div class="a" style="left:351px;top:575.5px;width:9px;height:1.2px;background:#fff"></div>
<div class="a" style="top:563.00px;font-size:16px;line-height:16px;font-weight:normal;color:#fff;white-space:pre;right:712.60px;">1.000 0 kHz</div>
<div class="a" style="top:563.00px;font-size:16px;line-height:16px;font-weight:normal;color:#fff;white-space:pre;right:571.80px;">-72.08 dB</div>
<div class="a" style="left:5px;top:733px;width:1033px;height:2px;background:linear-gradient(#8c8880,#b4b0a8)"></div>
<div class="a" style="left:4px;top:735px;width:1041px;height:34px;background:#ede7dc"></div>
<div class="a" style="left:4px;top:738px;width:1041px;height:1px;background:#fbf8f2"></div>
<div class="a" style="left:4px;top:740px;width:1041px;height:2px;background:linear-gradient(#a8a49c,#8c8880)"></div>
<div class="a" style="left:4px;top:742px;width:1041px;height:24px;background:#e8e4e4"></div>
<div class="a" style="left:4px;top:742px;width:1041px;height:1px;background:#f4f0ee"></div>
<div class="a" style="left:4px;top:765px;width:1041px;height:4px;background:linear-gradient(#b8b4b0,#6c6864)"></div>
<div class="a" style="left:34px;top:740px;width:2px;height:29px;background:#c4bcb0"></div>
<div class="a" style="left:665px;top:740px;width:1.5px;height:29px;background:#c4bcb0"></div>
<div class="a" style="left:714px;top:740px;width:1.5px;height:29px;background:#c4bcb0"></div>
<div class="a" style="top:749.00px;font-size:11.5px;line-height:11.5px;font-weight:normal;color:#222;white-space:pre;left:6.10px;transform:scaleX(0.9317);transform-origin:0 0;">MSG</div>
<div class="a" style="top:749.00px;font-size:11.5px;line-height:11.5px;font-weight:normal;color:#222;white-space:pre;left:666.90px;transform:scaleX(0.9938);transform-origin:0 0;">STATUS</div>
<div class="a" style="top:746.00px;font-size:17px;line-height:17px;font-weight:normal;color:#111;white-space:pre;left:61.00px;transform:scaleX(0.9735);transform-origin:0 0;">File &lt;Screen_0000.png&gt; saved</div>
<svg class="a" style="left:36px;top:743px" width="23" height="21" viewBox="0 0 23 21"><defs><radialGradient id="ig" cx="0.35" cy="0.3" r="0.8"><stop offset="0" stop-color="#ffffff"/><stop offset="0.6" stop-color="#d8e8f8"/><stop offset="1" stop-color="#7898c8"/></radialGradient></defs><path d="M11.5 1 C17.5 1 21.5 4.6 21.5 9 C21.5 13 18 16 13.5 16.6 L10 20.5 L10.2 16.4 C5.2 15.8 1.5 12.8 1.5 9 C1.5 4.6 5.5 1 11.5 1 Z" fill="url(#ig)" stroke="#8aa8d0" stroke-width="0.8"/><circle cx="11.5" cy="4.6" r="1.4" fill="#0a10f8"/><path d="M9.6 7.2 L12.6 7.2 L12.6 12.6 L13.8 12.6 L13.8 14 L9.4 14 L9.4 12.6 L10.6 12.6 L10.6 8.6 L9.6 8.6 Z" fill="#0a10f8"/></svg>
</body></html>
